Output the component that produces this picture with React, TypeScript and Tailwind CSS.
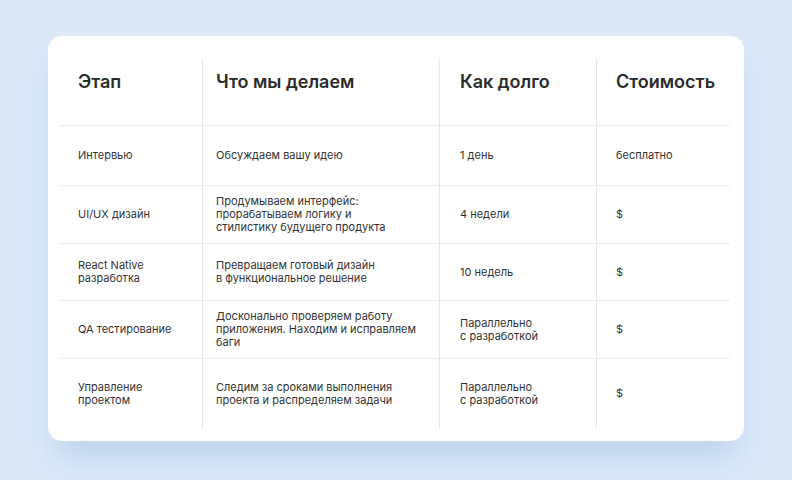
const rows: [string, string, string, string, number][] = [
  ["Интервью", "Обсуждаем вашу идею", "1 день", "бесплатно", 60],
  ["UI/UX дизайн", "Продумываем интерфейс:\nпрорабатываем логику и\nстилистику будущего продукта", "4 недели", "$", 58],
  ["React Native\nразработка", "Превращаем готовый дизайн\nв функциональное решение", "10 недель", "$", 57],
  ["QA тестирование", "Досконально проверяем работу\nприложения. Находим и исправляем\nбаги", "Параллельно\nс разработкой", "$", 58],
  ["Управление\nпроектом", "Следим за сроками выполнения\nпроекта и распределяем задачи", "Параллельно\nс разработкой", "$", 70],
];
const cols = ["pl-[18px]", "pl-[13px] border-l", "pl-[20px] border-l", "pl-[19px] border-l"];

export default function App() {
  return (
    <div className="w-[792px] h-[480px] bg-[#dde9f9] pt-[36px] pl-[48px]" style={{ fontFamily: "Inter, 'Noto Sans', sans-serif" }}>
      <div className="w-[696px] h-[405px] bg-white rounded-[14px] pt-[22px] pl-[12px] shadow-[0_22px_30px_-8px_rgba(160,190,225,0.55)]">
        <div className="grid grid-cols-[142px_237px_157px_134px] text-[#2b2b2b]">
          {["Этап", "Что мы делаем", "Как долго", "Стоимость"].map((h, i) => (
            <div key={h} className={`${cols[i]} border-[#e6e6e6] h-[67px] pt-[10px] text-[18px] font-semibold`}>{h}</div>
          ))}
          {rows.map((r) =>
            r.slice(0, 4).map((c, i) => (
              <div key={r[0] + i} className={`${cols[i]} border-[#e6e6e6] border-t border-t-[#ececec] flex items-center text-[11px] leading-[13px] whitespace-pre-line text-[#333]`} style={{ height: r[4] as number }}>
                {c as string}
              </div>
            ))
          )}
        </div>
      </div>
    </div>
  );
}
